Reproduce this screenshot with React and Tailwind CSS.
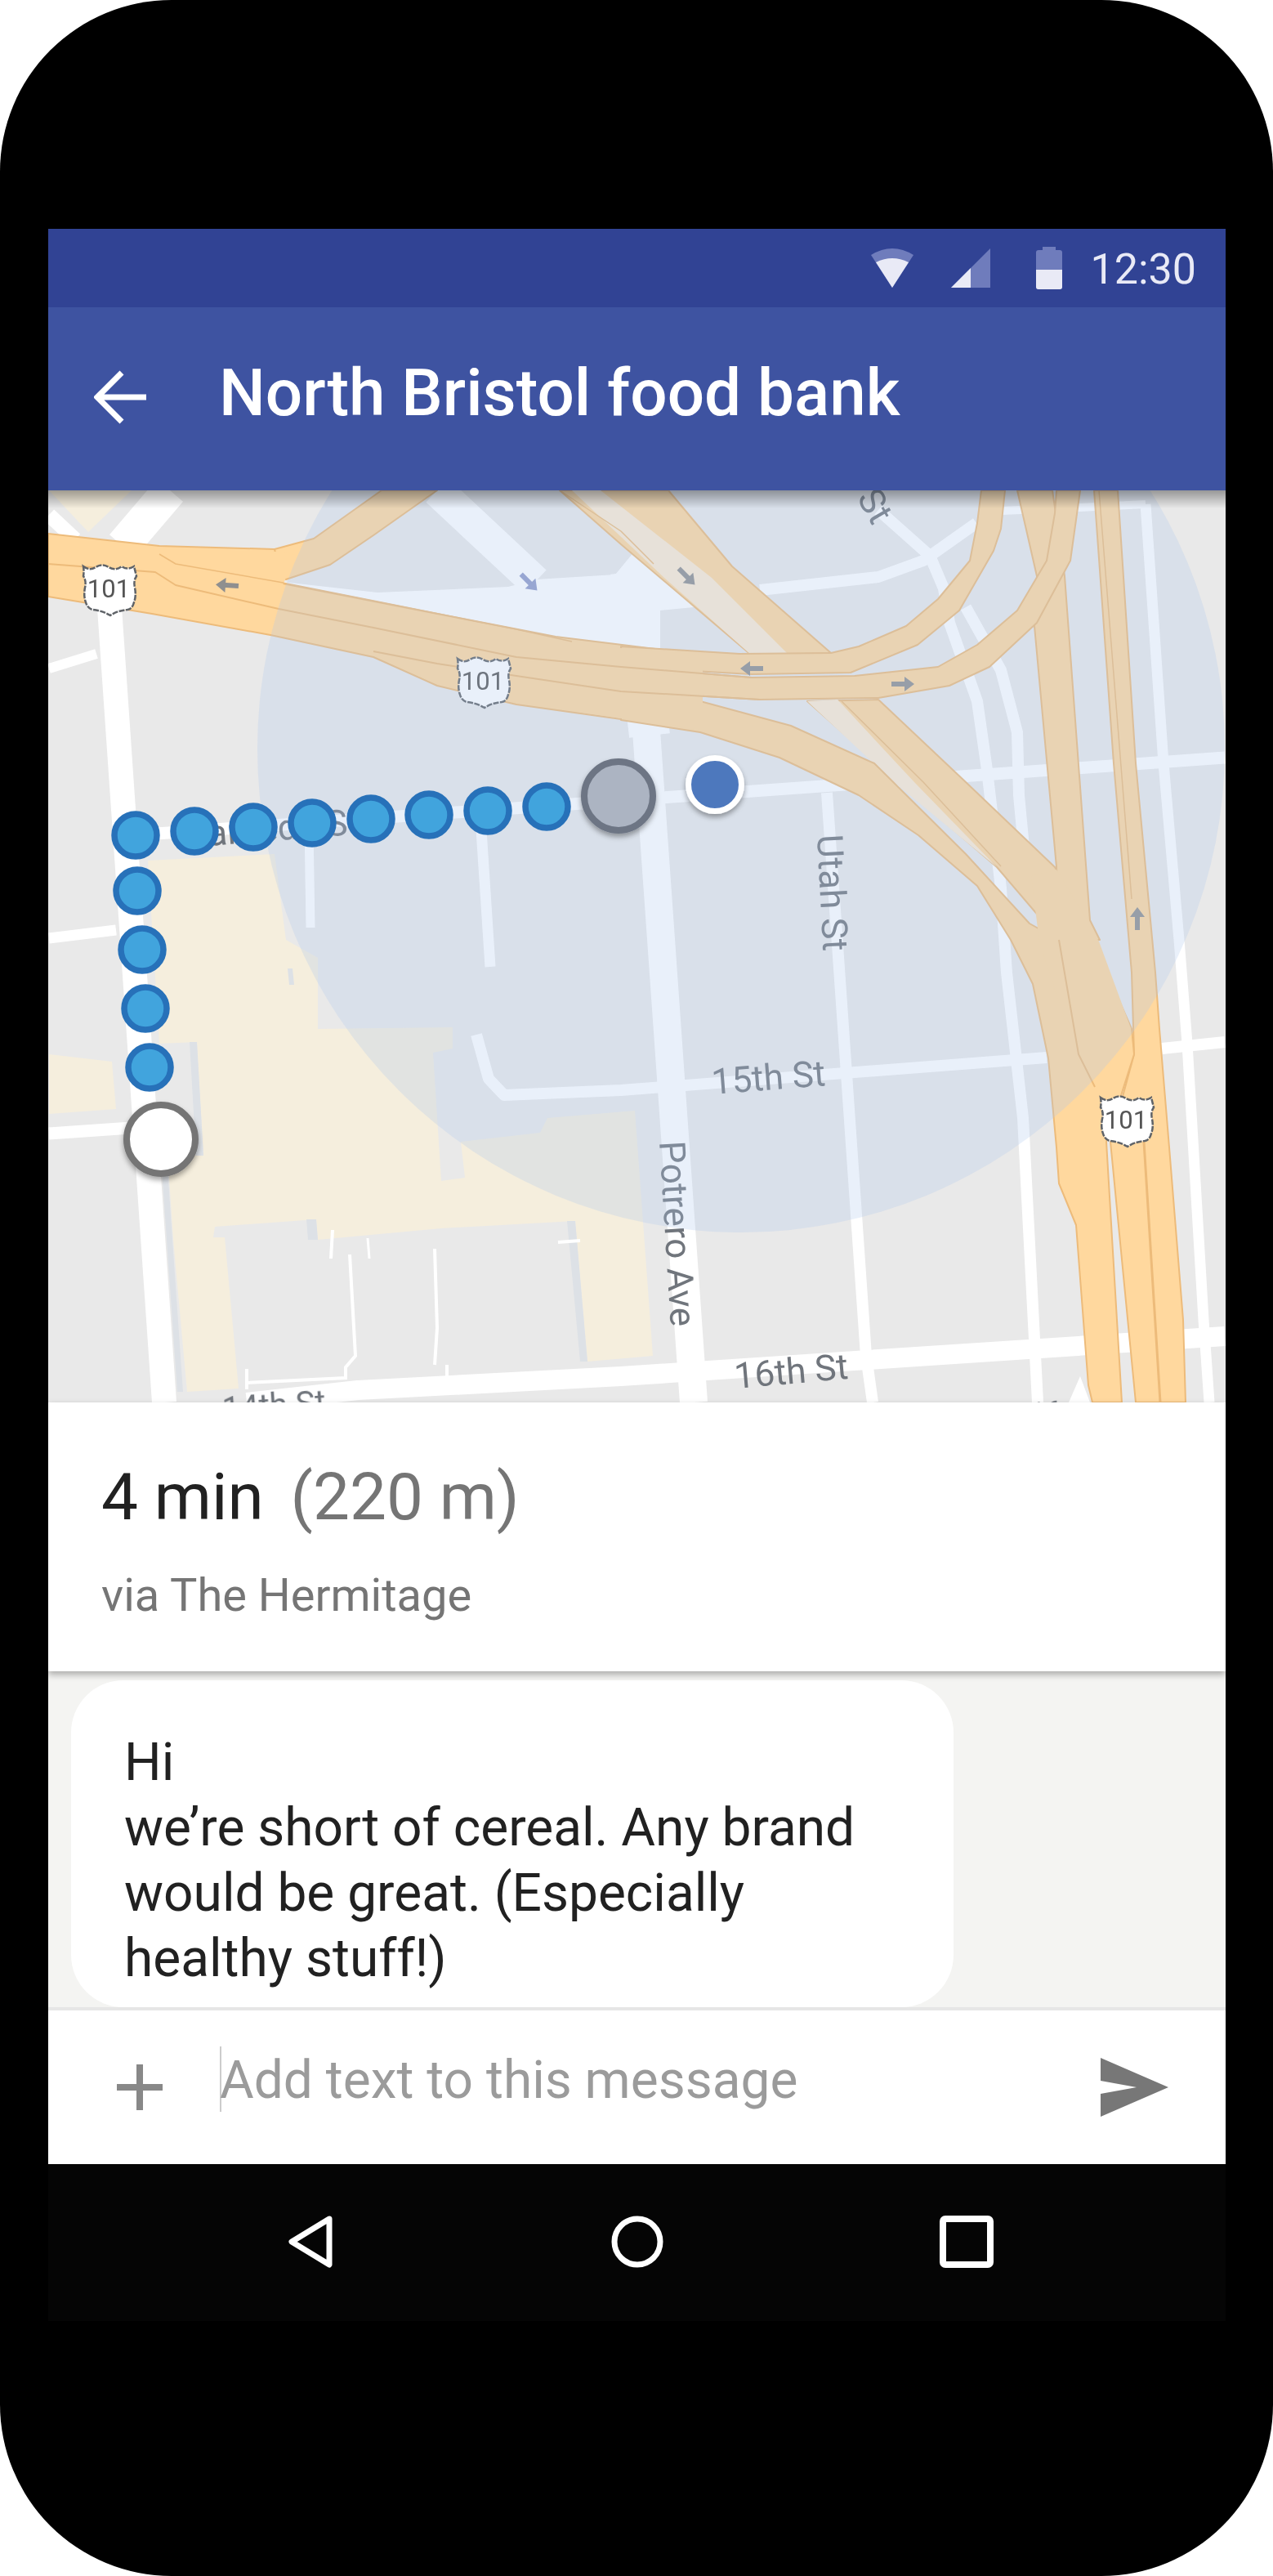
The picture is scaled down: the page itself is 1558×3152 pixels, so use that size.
import React from "react";

const FONT = { fontFamily: "Roboto, sans-serif" };
const pts = (a) => a.map((p) => p.join(",")).join(" ");
const ROAD = "#FFD89E";
const EDGE = "#EDBB7A";

function Fwy({ p, fill = ROAD, stroke = EDGE, sw = 2 }) {
  return <polygon points={pts(p)} fill={fill} stroke={stroke} strokeWidth={sw} strokeLinejoin="round" />;
}
function Patch({ p }) {
  return <polygon points={pts(p)} fill={ROAD} />;
}
function Line({ p, w = 2, c = EDGE }) {
  return <polyline points={pts(p)} fill="none" stroke={c} strokeWidth={w} strokeLinejoin="round" />;
}
function Street({ p, w = 14, c = "#fff" }) {
  return <polyline points={pts(p)} fill="none" stroke={c} strokeWidth={w} strokeLinejoin="round" />;
}
function Shield({ x, y }) {
  return (
    <g transform={`translate(${x} ${y})`}>
      <path
        d="M-31,-26 q8,6 15,1 q8,-5 16,0 q8,5 16,-1 q7,5 15,0 q2,8 3,12 q-4,6 -2,14 q2,10 -1,18 q-2,8 -8,9 q-12,1 -21,7 q-10,-6 -22,-7 q-6,-2 -8,-9 q-3,-8 -1,-18 q2,-8 -2,-14 q1,-6 0,-12 z"
        fill="#fff"
        stroke="#5f6368"
        strokeWidth="2.5"
        strokeDasharray="7 1.5"
      />
      <text x="0" y="12" textAnchor="middle" fontSize="31" fill="#555" style={FONT}>101</text>
    </g>
  );
}
function Arrow({ x, y, r, c = "#8f8f8f" }) {
  return (
    <g transform={`translate(${x} ${y}) rotate(${r})`} fill={c}>
      <rect x="-3" y="-3" width="19" height="6" />
      <polygon points="-12,0 0,-9 0,9" />
    </g>
  );
}
function Dot({ x, y }) {
  return <circle cx={x} cy={y} r="26" fill="#41A4DD" stroke="#2771B9" strokeWidth="7.5" />;
}
function Label({ x, y, r, size = 44, children }) {
  return (
    <text transform={`translate(${x} ${y}) rotate(${r})`} fontSize={size} fill="#70757c" style={FONT}>
      {children}
    </text>
  );
}

function MapArt() {
  const dots = [
    [166, 1022], [238, 1017], [310, 1012], [382, 1007], [454, 1002], [525, 997], [597, 992], [669, 987],
    [168, 1090], [174, 1162], [178, 1234], [183, 1306],
  ];
  return (
    <svg viewBox="59 600 1441 1116" className="block w-full h-full">
      <defs>
        <filter id="soft" x="-2%" y="-2%" width="104%" height="104%">
          <feGaussianBlur stdDeviation="0.7" />
        </filter>
        <filter id="drop" x="-40%" y="-40%" width="180%" height="190%">
          <feDropShadow dx="0" dy="4" stdDeviation="3" floodColor="#000" floodOpacity="0.35" />
        </filter>
      </defs>
      <rect x="59" y="600" width="1441" height="1116" fill="#E9E9E9" />
      <g filter="url(#soft)">
        {/* land use */}
        <polygon fill="#F5EEDD" points="60,600 161,600 108,651" />
        <polygon fill="#F5EEDD" points="60,1290 137,1299 142,1357 60,1363" />
        <polygon
          fill="#F5EEDD"
          points="181,1053 336,1045 350,1150 389,1172 389,1259 554,1257 554,1283 530,1288 540,1445 569,1441 564,1397 661,1386 670,1368 777,1359 799,1659 719,1666 704,1494 540,1503 389,1517 387,1492 263,1501 261,1514 275,1514 292,1699 229,1703 212,1517 205,1412 249,1414 241,1275 195,1277"
        />
        <polygon fill="#DDE1E6" points="232,1275 241,1275 249,1414 240,1414" />
        <polygon fill="#DDE1E6" points="198,1430 205,1430 224,1703 217,1703" />
        <polygon fill="#DDE1E6" points="694,1494 704,1494 719,1666 710,1666" />
        <polygon fill="#DDE1E6" points="375,1492 387,1492 389,1517 377,1517" />
        <polygon fill="#DDE1E6" points="352,1185 358,1185 360,1205 354,1205" />

        {/* streets */}
        <polygon fill="#fff" points="346,712 462,725 622,718 656,709 753,703 782,668 880,740 808,747 808,850 400,745" />
        <Street p={[[535, 600], [655, 712]]} w={40} />
        <Street p={[[208, 600], [150, 668]]} w={42} />
        <Street p={[[60, 630], [92, 660]]} w={18} />
        <Street p={[[131, 700], [201, 1716]]} w={30} />
        <Street p={[[60, 818], [118, 800]]} w={12} />
        <Street p={[[60, 1148], [142, 1138]]} w={13} />
        <Street p={[[60, 1387], [175, 1379]]} w={15} />
        <Street p={[[150, 1023], [1499, 927]]} w={15} />
        <Street p={[[790, 880], [849, 1716]]} w={34} />
        <Street p={[[772, 700], [795, 900]]} w={50} />
        <Street p={[[378, 1010], [380, 1135]]} w={11} />
        <Street p={[[588, 1000], [600, 1183]]} w={13} />
        <Street p={[[1012, 970], [1036, 1314], [1060, 1659], [1068, 1716]]} w={14} />
        <Street p={[[930, 722], [1075, 706], [1130, 686], [1195, 640]]} w={14} />
        <Street p={[[1075, 624], [1138, 680], [1155, 720], [1162, 762], [1196, 858], [1208, 942], [1225, 1087], [1232, 1190], [1252, 1368], [1270, 1716]]} w={14} />
        <Street p={[[1182, 743], [1225, 820], [1245, 896], [1247, 973], [1258, 1090]]} w={14} />
        <Street p={[[1225, 625], [1300, 622], [1402, 617]]} w={10} />
        <Street p={[[1402, 617], [1424, 934], [1443, 1150], [1453, 1277], [1473, 1615], [1480, 1716]]} w={13} />
        <Street p={[[1422, 1283], [1499, 1275]]} w={14} />
        <Street p={[[583, 1266], [598, 1320], [617, 1340], [760, 1334], [1281, 1294]]} w={14} />
        <Street p={[[302, 1716], [438, 1701], [760, 1684], [1499, 1635]]} w={24} />
        <polygon fill="#fff" points="1322,1684 1334,1716 1308,1716" />
        <polyline points="302,1675 302,1700" fill="none" stroke="#fff" strokeWidth="4" />
        <polyline points="302,1692 423,1686 423,1673 435,1659 428,1535" fill="none" stroke="#fff" strokeWidth="4" />
        <polyline points="407,1505 405,1540" fill="none" stroke="#fff" strokeWidth="4" />
        <polyline points="450,1515 452,1540" fill="none" stroke="#fff" strokeWidth="3" />
        <polyline points="532,1528 535,1625 532,1670" fill="none" stroke="#fff" strokeWidth="4" />
        <polyline points="547,1670 547,1692" fill="none" stroke="#fff" strokeWidth="4" />
        <polyline points="683,1520 710,1518" fill="none" stroke="#fff" strokeWidth="4" />

        {/* NW–SE freeway */}
        <Fwy p={[[685, 600], [818, 600], [896, 693], [1017, 799], [920, 802], [760, 666]]} />
        <polygon fill="#FCEBD2" points="700,600 735,600 871,707 964,800 920,802 813,707" />
        <Fwy p={[[988, 858], [1075, 856], [1182, 957], [1291, 1061], [1330, 1130], [1296, 1150], [1220, 1061], [1099, 957]]} />
        <polygon fill="#FCEBD2" points="988,858 1025,856 1119,957 1220,1061 1094,957" />
        <Line p={[[1030, 858], [1130, 957], [1225, 1060]]} w={1.5} />
        <Line p={[[685, 600], [760, 650], [800, 690]]} w={1.5} />

        {/* verticals */}
        <Fwy p={[[1245, 600], [1288, 600], [1303, 705], [1334, 1126], [1346, 1150], [1296, 1150], [1293, 1061], [1266, 766], [1269, 705]]} />
        <Fwy p={[[1339, 600], [1368, 600], [1390, 934], [1414, 1190], [1419, 1259], [1431, 1404], [1448, 1615], [1451, 1716], [1390, 1716], [1359, 1397], [1388, 1290], [1385, 1190], [1363, 934]]} />

        {/* west + ramps */}
        <Fwy p={[[300, 690], [336, 672], [384, 659], [467, 600], [535, 600], [457, 655], [404, 691], [350, 709]]} />
        <Fwy p={[[59, 653], [195, 668], [336, 672], [346, 714], [535, 751], [680, 779], [810, 795], [810, 887], [632, 862], [535, 839], [457, 804], [331, 777], [186, 751], [59, 730]]} />
        <Patch p={[[320, 675], [345, 675], [400, 688], [350, 707], [346, 716], [320, 708]]} />
        <Fwy p={[[760, 791], [905, 800], [1017, 799], [1051, 791], [1109, 766], [1148, 733], [1187, 686], [1196, 640], [1201, 600], [1230, 600], [1225, 647], [1216, 674], [1174, 747], [1123, 789], [1041, 823], [920, 825], [760, 816]]} />
        <Fwy p={[[760, 816], [920, 829], [1046, 827], [1148, 816], [1196, 789], [1245, 747], [1281, 686], [1291, 628], [1293, 600], [1322, 600], [1310, 686], [1269, 762], [1211, 816], [1162, 839], [1075, 854], [930, 856], [760, 846]]} />
        <Fwy p={[[760, 848], [857, 858], [968, 888], [1070, 934], [1182, 1045], [1260, 1130], [1296, 1150], [1337, 1150], [1385, 1259], [1388, 1290], [1354, 1397], [1373, 1716], [1337, 1716], [1332, 1695], [1317, 1499], [1296, 1448], [1293, 1404], [1283, 1295], [1264, 1204], [1237, 1150], [1196, 1084], [1124, 1022], [1051, 973], [954, 927], [857, 896], [760, 881]]} />
        <Patch p={[[700, 787], [760, 793], [810, 797], [860, 801], [860, 894], [810, 885], [760, 879], [700, 870]]} />
        <Patch p={[[1262, 1072], [1293, 1064], [1332, 1128], [1345, 1152], [1384, 1258], [1386, 1288], [1356, 1388], [1320, 1300], [1272, 1152]]} />
        <Line p={[[59, 690], [190, 700], [215, 716], [341, 745], [457, 768], [632, 804], [760, 816], [920, 829]]} />
        <Line p={[[195, 678], [215, 690], [341, 712], [457, 735], [632, 770], [700, 785]]} w={1.5} />
        <Line p={[[457, 797], [535, 812], [632, 827], [760, 846], [930, 856]]} />
        <Line p={[[1296, 1150], [1320, 1290], [1340, 1330]]} />
        <Line p={[[1400, 1397], [1420, 1716]]} w={3} />
        <Line p={[[1345, 600], [1385, 1100]]} w={1.5} />

        <Arrow x={276} y={716} r={4} />
        <Arrow x={918} y={818} r={0} />
        <Arrow x={1107} y={837} r={180} />
        <Arrow x={842} y={707} r={225} />
        <Arrow x={1392} y={1122} r={90} />
        <Arrow x={649} y={714} r={225} c="#8f9ac9" />

        <Shield x={133} y={719} />
        <Shield x={591} y={832} />
        <Shield x={1378} y={1369} />

        <Label x={872} y={1339} r={-4.5}>15th St</Label>
        <Label x={900} y={1699} r={-5}>16th St</Label>
        <Label x={807} y={1397} r={86.5}>Potrero Ave</Label>
        <Label x={1000} y={1022} r={87}>Utah St</Label>
        <Label x={1048} y={609} r={60}>St</Label>
        <Label x={216} y={1038} r={-4.5}>Alameda St</Label>
        <Label x={273} y={1738} r={-4} size={40}>14th St</Label>
        <Label x={1262} y={1740} r={-4} size={34}>16</Label>
      </g>

      <circle cx="907" cy="916" r="592" fill="#AEC8ED" fillOpacity="0.27" />

      {dots.map(([x, y]) => (
        <Dot key={`${x}-${y}`} x={x} y={y} />
      ))}
      <g filter="url(#drop)">
        <circle cx="757" cy="974" r="42" fill="#ACB4C2" stroke="#6D7584" strokeWidth="8" />
        <circle cx="197" cy="1394" r="42" fill="#fff" stroke="#757575" strokeWidth="8" />
        <circle cx="875" cy="960" r="32.5" fill="#4E78BD" stroke="#fff" strokeWidth="7" />
      </g>
    </svg>
  );
}

export default function App() {
  return (
    <div className="w-[1558px] h-[3152px] bg-white" style={FONT}>
      <div className="w-[1558px] h-[3152px] bg-black rounded-[210px] pt-[280px] pl-[59px] pr-[58px] flex flex-col overflow-hidden">
        {/* status bar */}
        <div className="h-[96px] shrink-0 bg-[#314394] flex items-center justify-end pr-[36px]">
          <svg width="54" height="50" viewBox="1065 303 54 50" className="block">
            <path d="M1065,312 Q1091,296 1117,312 L1091,352 Z" fill="#6F7CBC" />
            <path d="M1071,321 Q1091,311 1111,321 L1091,352 Z" fill="#E9EAF6" />
          </svg>
          <svg width="49" height="50" viewBox="1163 303 49 50" className="block ml-[44px]">
            <polygon points="1163,352 1211,304 1211,352" fill="#6F7CBC" />
            <polygon points="1163,352 1187,328 1187,352" fill="#E9EAF6" />
          </svg>
          <svg width="33" height="53" viewBox="1267 300 33 53" className="block ml-[55px]">
            <rect x="1275" y="300" width="16" height="6" fill="#6F7CBC" />
            <rect x="1267" y="304" width="32" height="48" rx="3" fill="#6F7CBC" />
            <path d="M1267,328 H1299 V349 a3,3 0 0 1 -3,3 H1270 a3,3 0 0 1 -3,-3 Z" fill="#E9EAF6" />
          </svg>
          <span className="ml-[34px] mt-[3px] text-[52px] leading-[60px] text-[#E9EAF6] font-normal">12:30</span>
        </div>

        {/* app bar */}
        <div className="h-[224px] shrink-0 bg-[#3E53A1] flex items-center pb-[14px] relative z-10">
          <svg width="66" height="66" viewBox="0 0 66 66" className="block ml-[56px] mt-[10px]">
            <path d="M64,33 H6 M34,3 L4,33 L34,63" fill="none" stroke="#fff" strokeWidth="7" />
          </svg>
          <span className="ml-[87px] text-[80px] leading-[90px] font-medium text-white whitespace-nowrap">North Bristol food bank</span>
        </div>

        {/* map */}
        <div className="h-[1116px] shrink-0 relative overflow-hidden">
          <MapArt />
          <div className="absolute left-0 right-0 top-0 h-[22px] bg-gradient-to-b from-[#00000059] to-transparent" />
        </div>

        {/* route card */}
        <div className="h-[329px] shrink-0 bg-white pl-[65px] pt-[71px] relative z-10 shadow-[0_4px_8px_rgba(0,0,0,0.3)]">
          <div className="text-[80px] leading-[90px] whitespace-nowrap text-[#212121]">
            4 min<span className="ml-[33px] text-[#757575]">(220 m)</span>
          </div>
          <div className="mt-[45px] text-[56px] leading-[60px] text-[#757575] whitespace-nowrap">via The Hermitage</div>
        </div>

        {/* chat */}
        <div className="h-[415px] shrink-0 bg-[#F4F4F2] pt-[11px] pl-[28px] border-b-4 border-[#E6E6E6]">
          <div className="w-[1080px] h-[400px] rounded-[64px] bg-white pl-[65px] pt-[61px] text-[64px] leading-[80px] text-[#212121] whitespace-nowrap">
            Hi
            <br />
            we’re short of cereal. Any brand
            <br />
            would be great. (Especially
            <br />
            healthy stuff!)
          </div>
        </div>

        {/* input */}
        <div className="h-[188px] shrink-0 bg-white flex items-center">
          <svg width="56" height="56" viewBox="0 0 56 56" className="block ml-[84px]">
            <path d="M28,0 V56 M0,28 H56" stroke="#888" strokeWidth="8" />
          </svg>
          <div className="ml-[70px] w-[2px] h-[80px] bg-[#CCCCCC] -mt-[20px]" />
          <span className="text-[64px] leading-[70px] text-[#9B9B9B] whitespace-nowrap -mt-[16px] -ml-[2px]">Add text to this message</span>
          <svg width="83" height="72" viewBox="0 0 83 72" className="block ml-auto mr-[70px]">
            <path d="M0,0 L83,36 L0,72 L0,44 L44,36 L0,28 Z" fill="#777" />
          </svg>
        </div>

        {/* nav */}
        <div className="h-[192px] shrink-0 bg-[#050505] flex items-start pt-[63px] pl-[294px]">
          <svg width="54" height="64" viewBox="0 0 54 64" className="block">
            <path d="M50,4 L4,32 L50,60 Z" fill="none" stroke="#fff" strokeWidth="7" strokeLinejoin="round" />
          </svg>
          <svg width="64" height="64" viewBox="0 0 64 64" className="block ml-[341px]">
            <circle cx="32" cy="32" r="28" fill="none" stroke="#fff" strokeWidth="7" />
          </svg>
          <svg width="66" height="64" viewBox="0 0 66 64" className="block ml-[338px]">
            <rect x="4" y="4" width="58" height="56" rx="3" fill="none" stroke="#fff" strokeWidth="8" />
          </svg>
        </div>
      </div>
    </div>
  );
}
